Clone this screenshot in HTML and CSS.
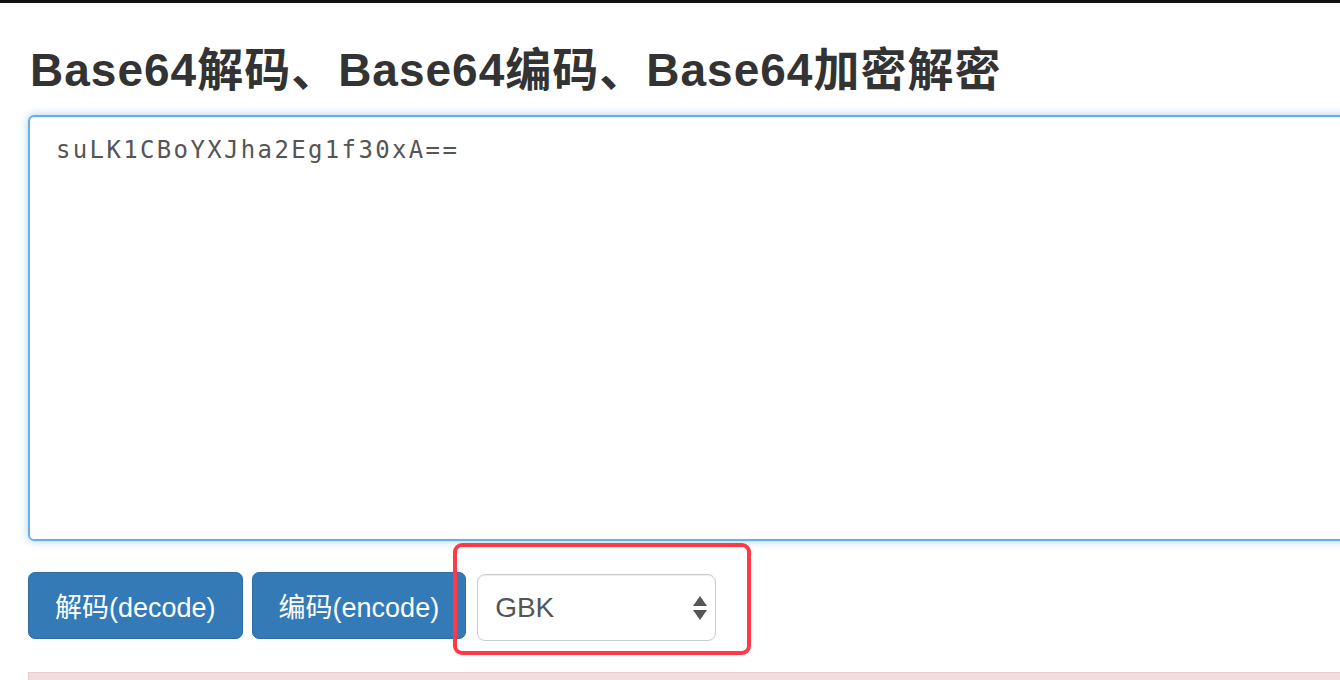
FILE: index.html
```html
<!DOCTYPE html>
<html lang="zh">
<head>
<meta charset="utf-8">
<title>Base64解码、Base64编码、Base64加密解密</title>
<link rel="stylesheet" href="styles.css">
</head>
<body>
<div class="topbar"></div>
<main class="page">
  <h1 class="title">Base64解码、Base64编码、Base64加密解密</h1>
  <div class="editor">suLK1CBoYXJha2Eg1f30xA==</div>
  <div class="actions">
    <button class="btn">解码(decode)</button>
    <button class="btn">编码(encode)</button>
    <div class="select-wrap">
      <div class="select">
        <span class="select-value">GBK</span>
        <svg class="select-arrows" width="16" height="26" viewBox="0 0 16 26">
          <path d="M8 1 L15 11 L1 11 Z" fill="#555"/>
          <path d="M1 15 L15 15 L8 25 Z" fill="#555"/>
        </svg>
      </div>
      <div class="highlight"></div>
    </div>
  </div>
  <div class="alert"></div>
</main>
</body>
</html>
```

FILE: styles.css
```css
html, body {
  margin: 0;
  padding: 0;
  background: #fff;
  overflow: hidden;
  height: 680px;
}
body {
  font-family: "Liberation Sans", Arial, "Noto Sans CJK SC", sans-serif;
  color: #333;
}
.topbar {
  height: 3px;
  background: #111;
}
.page {
  padding-left: 28px;
}
.title {
  margin: 0;
  padding: 42px 0 0 2px;
  font-size: 46px;
  line-height: 50px;
  font-weight: bold;
  color: #333;
  white-space: nowrap;
  letter-spacing: 1px;
}
.editor {
  margin-top: 20px;
  box-sizing: border-box;
  width: 1360px;
  height: 426px;
  border: 2px solid #66afe9;
  border-radius: 6px;
  box-shadow: inset 0 1px 1px rgba(0,0,0,.075), 0 0 8px rgba(102,175,233,.6);
  padding: 17px 26px;
  font-family: "DejaVu Sans Mono", Menlo, monospace;
  font-size: 24px;
  letter-spacing: 2.35px;
  line-height: 32px;
  color: #555;
}
.actions {
  display: flex;
  align-items: flex-start;
  gap: 9px;
  margin-top: 31px;
}
.btn {
  height: 67px;
  padding: 0 26px 0 26px;
  font-family: "Liberation Sans", Arial, "Noto Sans CJK SC", sans-serif;
  font-size: 27px;
  color: #fff;
  background: #337ab7;
  border: 1.5px solid #2e6da4;
  border-radius: 7px;
  cursor: pointer;
  white-space: nowrap;
}
.select-wrap {
  position: relative;
  margin-left: 2px;
  margin-top: 2px;
}
.select {
  box-sizing: border-box;
  width: 239px;
  height: 67px;
  border: 1.5px solid #ccc;
  border-radius: 8px;
  background: #fff;
  box-shadow: inset 0 1px 1px rgba(0,0,0,.075);
  display: flex;
  align-items: center;
  justify-content: space-between;
  padding: 0 7px 0 17px;
  font-size: 28px;
  color: #555;
}
.select-value {
  padding-top: 1px;
}
.highlight {
  position: absolute;
  left: -24px;
  top: -31px;
  width: 298px;
  height: 112px;
  box-sizing: border-box;
  border: 4px solid #fe3a47;
  border-radius: 9px;
}
.alert {
  margin-top: 31px;
  height: 40px;
  background: #f2dede;
  border: 1px solid #ebccd1;
  border-right: none;
}
```
